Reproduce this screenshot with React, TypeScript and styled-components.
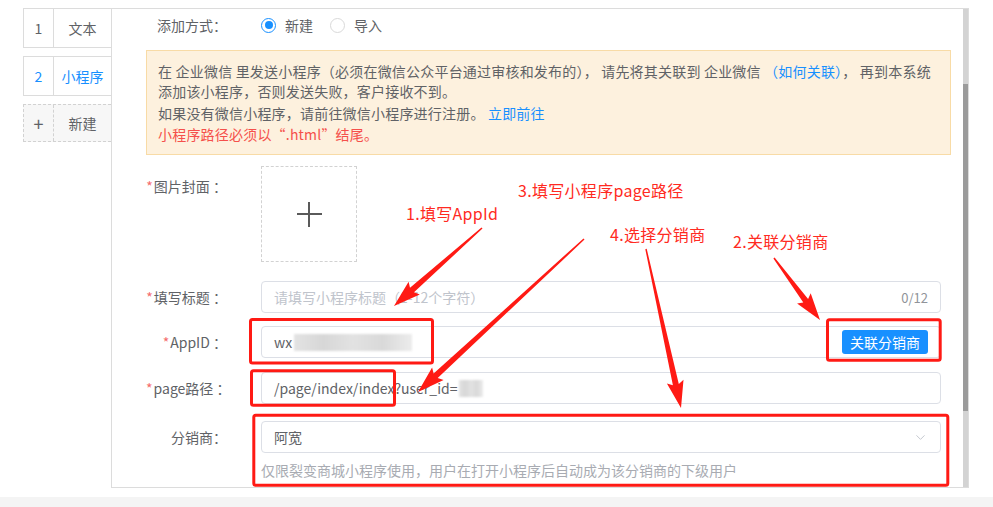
import React from 'react';
import styled, { createGlobalStyle } from 'styled-components';
import { ChevronDown } from 'lucide-react';

const GlobalStyle = createGlobalStyle`
  html, body {
    margin: 0;
    padding: 0;
    background: #fff;
  }
  body {
    font-family: "Noto Sans CJK SC", "Noto Sans", sans-serif;
    font-size: 14px;
    color: #606266;
  }
  * {
    box-sizing: border-box;
  }
`;

const Page = styled.div`
  position: relative;
  width: 993px;
  height: 507px;
  overflow: hidden;
  display: flex;
  flex-direction: column;
`;

const Workspace = styled.div`
  display: flex;
  align-items: flex-start;
  padding: 8px 0 0 23px;
  height: 497px;
`;

const Footer = styled.div`
  height: 10px;
  background: #f4f4f4;
`;

const TabList = styled.div`
  width: 88px;
  display: flex;
  flex-direction: column;
  gap: 8px;
`;

const Tab = styled.div<{ $active?: boolean; $dashed?: boolean }>`
  display: flex;
  height: ${p => (p.$dashed ? 38 : 40)}px;
  border: 1px ${p => (p.$dashed ? 'dashed #d2d2d2' : 'solid #dcdcdc')};
  border-right: none;
  background: ${p => (p.$dashed ? '#f7f7f7' : '#fff')};
  color: ${p => (p.$active ? '#1890ff' : '#606266')};
  font-size: 14px;
`;

const TabIndex = styled.div<{ $dashed?: boolean }>`
  width: 30px;
  display: flex;
  align-items: center;
  justify-content: center;
  border-right: 1px ${p => (p.$dashed ? 'dashed #d2d2d2' : 'solid #dcdcdc')};
  font-size: ${p => (p.$dashed ? 18 : 14)}px;
  color: inherit;
`;

const TabName = styled.div`
  flex: 1;
  display: flex;
  align-items: center;
  justify-content: center;
`;

const Panel = styled.div`
  width: 858px;
  height: 480px;
  border: 1px solid #dcdcdc;
  display: flex;
`;

const Body = styled.div`
  flex: 1;
  padding: 0 12px 0 34px;
  overflow: hidden;
`;

const Scrollbar = styled.div`
  width: 5px;
  background: #d3d3d3;
  display: flex;
  flex-direction: column;
`;

const Thumb = styled.div`
  margin-top: 75px;
  height: 327px;
  background: #9b9b9b;
`;

const FormItem = styled.div<{ $mt?: number }>`
  display: flex;
  align-items: flex-start;
  margin-top: ${p => p.$mt ?? 0}px;
`;

const Label = styled.div<{ $pt?: number }>`
  width: 115px;
  flex-shrink: 0;
  text-align: right;
  padding-right: 34px;
  padding-top: ${p => p.$pt ?? 0}px;
  line-height: 32px;
  white-space: nowrap;
  color: #606266;
`;

const Star = styled.span`
  color: #f56c6c;
  margin-right: 1px;
`;

const Content = styled.div`
  flex: 1;
  margin-right: 10px;
  min-width: 0;
`;

const RadioGroup = styled.div`
  height: 32px;
  display: flex;
  align-items: center;
  gap: 17px;
`;

const RadioOption = styled.label`
  display: flex;
  align-items: center;
  gap: 9px;
  color: #606266;
`;

const RadioDot = styled.span<{ $checked?: boolean }>`
  width: 15px;
  height: 15px;
  border-radius: 50%;
  border: 1px solid ${p => (p.$checked ? '#1890ff' : '#d9d9d9')};
  display: flex;
  align-items: center;
  justify-content: center;
  &::after {
    content: '';
    width: 8px;
    height: 8px;
    border-radius: 50%;
    background: ${p => (p.$checked ? '#1890ff' : 'transparent')};
  }
`;

const Notice = styled.div`
  margin-top: 9px;
  background: #fdf1de;
  border: 1px solid #f8dba6;
  padding: 10px 11px;
  color: #606266;
  font-size: 14px;
  line-height: 20px;
  letter-spacing: 0.2px;
  white-space: nowrap;
`;

const NoticeLine = styled.div<{ $mt?: number; $warn?: boolean }>`
  margin-top: ${p => p.$mt ?? 0}px;
  color: ${p => (p.$warn ? '#f5504b' : 'inherit')};
`;

const Link = styled.span`
  color: #1890ff;
`;

const Upload = styled.div`
  width: 96px;
  height: 96px;
  border: 1px dashed #d2d2d2;
  display: flex;
  align-items: center;
  justify-content: center;
`;

const PlusMark = styled.span`
  position: relative;
  width: 25px;
  height: 25px;
  &::before,
  &::after {
    content: '';
    position: absolute;
    background: #5a5a5a;
  }
  &::before {
    left: 0;
    right: 0;
    top: 11px;
    height: 2.5px;
  }
  &::after {
    top: 0;
    bottom: 0;
    left: 11px;
    width: 2.5px;
  }
`;

const Input = styled.div`
  height: 32px;
  border: 1px solid #dcdfe6;
  border-radius: 4px;
  padding: 0 12px;
  display: flex;
  align-items: center;
  justify-content: space-between;
  color: #606266;
  white-space: nowrap;
`;

const Value = styled.span`
  display: flex;
  align-items: center;
`;

const Placeholder = styled.span`
  color: #c0c4cc;
`;

const Counter = styled.span`
  color: #909399;
  font-size: 13px;
`;

const Masked = styled.span<{ $w: number }>`
  display: inline-block;
  width: ${p => p.$w}px;
  height: 17px;
  margin-left: 2px;
  background: linear-gradient(90deg, #e3e3e3, #d7d7d7 25%, #e2e2e2 50%, #d9d9d9 75%, #ececec);
  filter: blur(1.2px);
`;

const LinkButton = styled.button`
  height: 24px;
  width: 86px;
  border: none;
  border-radius: 3px;
  background: #1890ff;
  color: #fff;
  font-family: inherit;
  font-size: 14px;
  padding: 0;
`;

const Help = styled.div`
  margin-top: 7px;
  line-height: 20px;
  color: #a8abb2;
  white-space: nowrap;
`;

const Overlay = styled.div`
  position: absolute;
  inset: 0;
  pointer-events: none;
`;

const Callout = styled.span<{ $x: number; $y: number }>`
  position: absolute;
  left: ${p => p.$x}px;
  top: ${p => p.$y}px;
  font-size: 16px;
  line-height: 20px;
  letter-spacing: 0.3px;
  color: #ff2a22;
  white-space: nowrap;
`;

type Pt = [number, number];

const arrowPoints = (tail: Pt, tip: Pt, headLen = 24, headW = 17, neckW = 6, tailW = 1.5) => {
  const dx = tip[0] - tail[0];
  const dy = tip[1] - tail[1];
  const len = Math.hypot(dx, dy);
  const ux = dx / len;
  const uy = dy / len;
  const nx = -uy;
  const ny = ux;
  const neck: Pt = [tip[0] - ux * headLen, tip[1] - uy * headLen];
  const barb: Pt = [neck[0] - ux * 3, neck[1] - uy * 3];
  const pts: Pt[] = [
    [tail[0] + (nx * tailW) / 2, tail[1] + (ny * tailW) / 2],
    [neck[0] + (nx * neckW) / 2, neck[1] + (ny * neckW) / 2],
    [barb[0] + (nx * headW) / 2, barb[1] + (ny * headW) / 2],
    tip,
    [barb[0] - (nx * headW) / 2, barb[1] - (ny * headW) / 2],
    [neck[0] - (nx * neckW) / 2, neck[1] - (ny * neckW) / 2],
    [tail[0] - (nx * tailW) / 2, tail[1] - (ny * tailW) / 2],
  ];
  return pts.map(p => p.map(v => v.toFixed(1)).join(',')).join(' ');
};

const arrows: { tail: Pt; tip: Pt }[] = [
  { tail: [482, 228], tip: [394, 306] },
  { tail: [584, 239], tip: [418, 392] },
  { tail: [646, 249], tip: [681, 408] },
  { tail: [774, 258], tip: [820, 320] },
];

const boxes = [
  { x: 250.5, y: 319.5, w: 182, h: 43.5 },
  { x: 251.5, y: 370.8, w: 143, h: 34.4 },
  { x: 253.8, y: 415.2, w: 694, h: 70 },
  { x: 827.5, y: 319.8, w: 112.7, h: 40.4 },
];

const callouts = [
  { x: 406, y: 203, text: '1.填写AppId' },
  { x: 518, y: 180, text: '3.填写小程序page路径' },
  { x: 610, y: 224, text: '4.选择分销商' },
  { x: 733, y: 231, text: '2.关联分销商' },
];

const tabs = [
  { index: '1', name: '文本' },
  { index: '2', name: '小程序', active: true },
];

const App: React.FC = () => {
  return (
    <Page>
      <GlobalStyle />
      <Workspace>
        <TabList>
          {tabs.map(tab => (
            <Tab key={tab.index} $active={tab.active}>
              <TabIndex>{tab.index}</TabIndex>
              <TabName>{tab.name}</TabName>
            </Tab>
          ))}
          <Tab $dashed>
            <TabIndex $dashed>+</TabIndex>
            <TabName>新建</TabName>
          </Tab>
        </TabList>

        <Panel>
          <Body>
            <FormItem>
              <Label>添加方式：</Label>
              <Content>
                <RadioGroup>
                  <RadioOption>
                    <RadioDot $checked />
                    新建
                  </RadioOption>
                  <RadioOption>
                    <RadioDot />
                    导入
                  </RadioOption>
                </RadioGroup>
              </Content>
            </FormItem>

            <Notice>
              <NoticeLine>
                在 企业微信 里发送小程序（必须在微信公众平台通过审核和发布的）， 请先将其关联到 企业微信{' '}
                <Link>（如何关联）</Link>， 再到本系统
              </NoticeLine>
              <NoticeLine>添加该小程序，否则发送失败，客户接收不到。</NoticeLine>
              <NoticeLine $mt={2}>
                如果没有微信小程序，请前往微信小程序进行注册。 <Link>立即前往</Link>
              </NoticeLine>
              <NoticeLine $mt={1} $warn>
                小程序路径必须以“.html”结尾。
              </NoticeLine>
            </Notice>

            <FormItem $mt={11}>
              <Label $pt={4}>
                <Star>*</Star>图片封面 ：
              </Label>
              <Content>
                <Upload>
                  <PlusMark />
                </Upload>
              </Content>
            </FormItem>

            <FormItem $mt={19}>
              <Label>
                <Star>*</Star>填写标题 ：
              </Label>
              <Content>
                <Input>
                  <Placeholder>请填写小程序标题（1-12个字符）</Placeholder>
                  <Counter>0/12</Counter>
                </Input>
              </Content>
            </FormItem>

            <FormItem $mt={13}>
              <Label>
                <Star>*</Star>AppID ：
              </Label>
              <Content>
                <Input>
                  <Value>
                    wx
                    <Masked $w={118} />
                  </Value>
                  <LinkButton>关联分销商</LinkButton>
                </Input>
              </Content>
            </FormItem>

            <FormItem $mt={14}>
              <Label>
                <Star>*</Star>page路径 ：
              </Label>
              <Content>
                <Input>
                  <Value>
                    /page/index/index?user_id=
                    <Masked $w={24} />
                  </Value>
                </Input>
              </Content>
            </FormItem>

            <FormItem $mt={17}>
              <Label>分销商：</Label>
              <Content>
                <Input>
                  <Value>阿宽</Value>
                  <ChevronDown size={15} color="#c0c4cc" strokeWidth={1.5} />
                </Input>
                <Help>仅限裂变商城小程序使用，用户在打开小程序后自动成为该分销商的下级用户</Help>
              </Content>
            </FormItem>
          </Body>
          <Scrollbar>
            <Thumb />
          </Scrollbar>
        </Panel>
      </Workspace>
      <Footer />

      <Overlay>
        <svg width="993" height="507" viewBox="0 0 993 507">
          {boxes.map((b, i) => (
            <rect key={i} x={b.x} y={b.y} width={b.w} height={b.h} rx={2} fill="none" stroke="#ff1a14" strokeWidth={3} />
          ))}
          {arrows.map((a, i) => (
            <polygon key={i} points={arrowPoints(a.tail, a.tip)} fill="#ff1a14" />
          ))}
        </svg>
        {callouts.map(c => (
          <Callout key={c.text} $x={c.x} $y={c.y}>
            {c.text}
          </Callout>
        ))}
      </Overlay>
    </Page>
  );
};

export default App;
